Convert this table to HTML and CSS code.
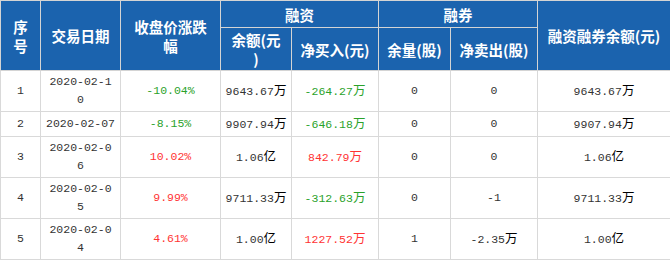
FILE: index.html
```html
<!DOCTYPE html>
<html lang="zh-CN">

<head>
    <meta charset="UTF-8" />
    <title>融资融券</title>
    <link rel="stylesheet" href="styles.css">
</head>

<body>
    <table class="margin-table">
        <colgroup>
            <col class="c-no">
            <col class="c-date">
            <col class="c-chg">
            <col class="c-bal">
            <col class="c-buy">
            <col class="c-vol">
            <col class="c-sell">
            <col class="c-total">
        </colgroup>
        <thead>
            <tr class="head-top">
                <th rowspan="2">序<br>号</th>
                <th rowspan="2">交易日期</th>
                <th rowspan="2">收盘价涨跌<br>幅</th>
                <th colspan="2">融资</th>
                <th colspan="2">融券</th>
                <th rowspan="2">融资融券余额(元)</th>
            </tr>
            <tr class="head-sub">
                <th>余额(元<br>)</th>
                <th>净买入(元)</th>
                <th>余量(股)</th>
                <th>净卖出(股)</th>
            </tr>
        </thead>
        <tbody>
            <tr class="tall">
                <td>1</td>
                <td>2020-02-1<br>0</td>
                <td class="down">-10.04%</td>
                <td>9643.67<span class="unit">万</span></td>
                <td class="down">-264.27<span class="unit">万</span></td>
                <td>0</td>
                <td>0</td>
                <td>9643.67<span class="unit">万</span></td>
            </tr>
            <tr class="short">
                <td>2</td>
                <td>2020-02-07</td>
                <td class="down">-8.15%</td>
                <td>9907.94<span class="unit">万</span></td>
                <td class="down">-646.18<span class="unit">万</span></td>
                <td>0</td>
                <td>0</td>
                <td>9907.94<span class="unit">万</span></td>
            </tr>
            <tr class="tall">
                <td>3</td>
                <td>2020-02-0<br>6</td>
                <td class="up">10.02%</td>
                <td>1.06<span class="unit">亿</span></td>
                <td class="up">842.79<span class="unit">万</span></td>
                <td>0</td>
                <td>0</td>
                <td>1.06<span class="unit">亿</span></td>
            </tr>
            <tr class="tall">
                <td>4</td>
                <td>2020-02-0<br>5</td>
                <td class="up">9.99%</td>
                <td>9711.33<span class="unit">万</span></td>
                <td class="down">-312.63<span class="unit">万</span></td>
                <td>0</td>
                <td>-1</td>
                <td>9711.33<span class="unit">万</span></td>
            </tr>
            <tr class="tall">
                <td>5</td>
                <td>2020-02-0<br>4</td>
                <td class="up">4.61%</td>
                <td>1.00<span class="unit">亿</span></td>
                <td class="up">1227.52<span class="unit">万</span></td>
                <td>1</td>
                <td>-2.35<span class="unit">万</span></td>
                <td>1.00<span class="unit">亿</span></td>
            </tr>
        </tbody>
    </table>
</body>

</html>
```

FILE: styles.css
```css
body {
    margin: 0;
    background: #fff;
}

.margin-table {
    width: 670px;
    table-layout: fixed;
    border-collapse: collapse;
    font-family: "Liberation Mono", "Noto Sans CJK SC", monospace;
    font-size: 11.5px;
    color: #333;
}

.c-no { width: 40px; }
.c-date { width: 80px; }
.c-chg { width: 100px; }
.c-bal { width: 71px; }
.c-buy { width: 87px; }
.c-vol { width: 72px; }
.c-sell { width: 87px; }
.c-total { width: 133px; }

th,
td {
    border: 1px solid #d9d9d9;
    text-align: center;
    vertical-align: middle;
    padding: 0 2px;
}

th {
    background: #1b63ae;
    color: #fff;
    font-family: "Noto Sans CJK SC", sans-serif;
    font-size: 14.5px;
    font-weight: bold;
    line-height: 19px;
    border-color: #d4d4d4;
}

.head-top {
    height: 27px;
}

.head-sub {
    height: 43px;
}

td {
    line-height: 18px;
}

tr.tall {
    height: 41px;
}

tr.short {
    height: 25px;
}

.unit {
    font-family: "Noto Sans CJK SC", sans-serif;
    font-size: 12.5px;
    color: #000;
}

.down,
.down .unit {
    color: #2aa22a;
}

.up,
.up .unit {
    color: #f33;
}
```
